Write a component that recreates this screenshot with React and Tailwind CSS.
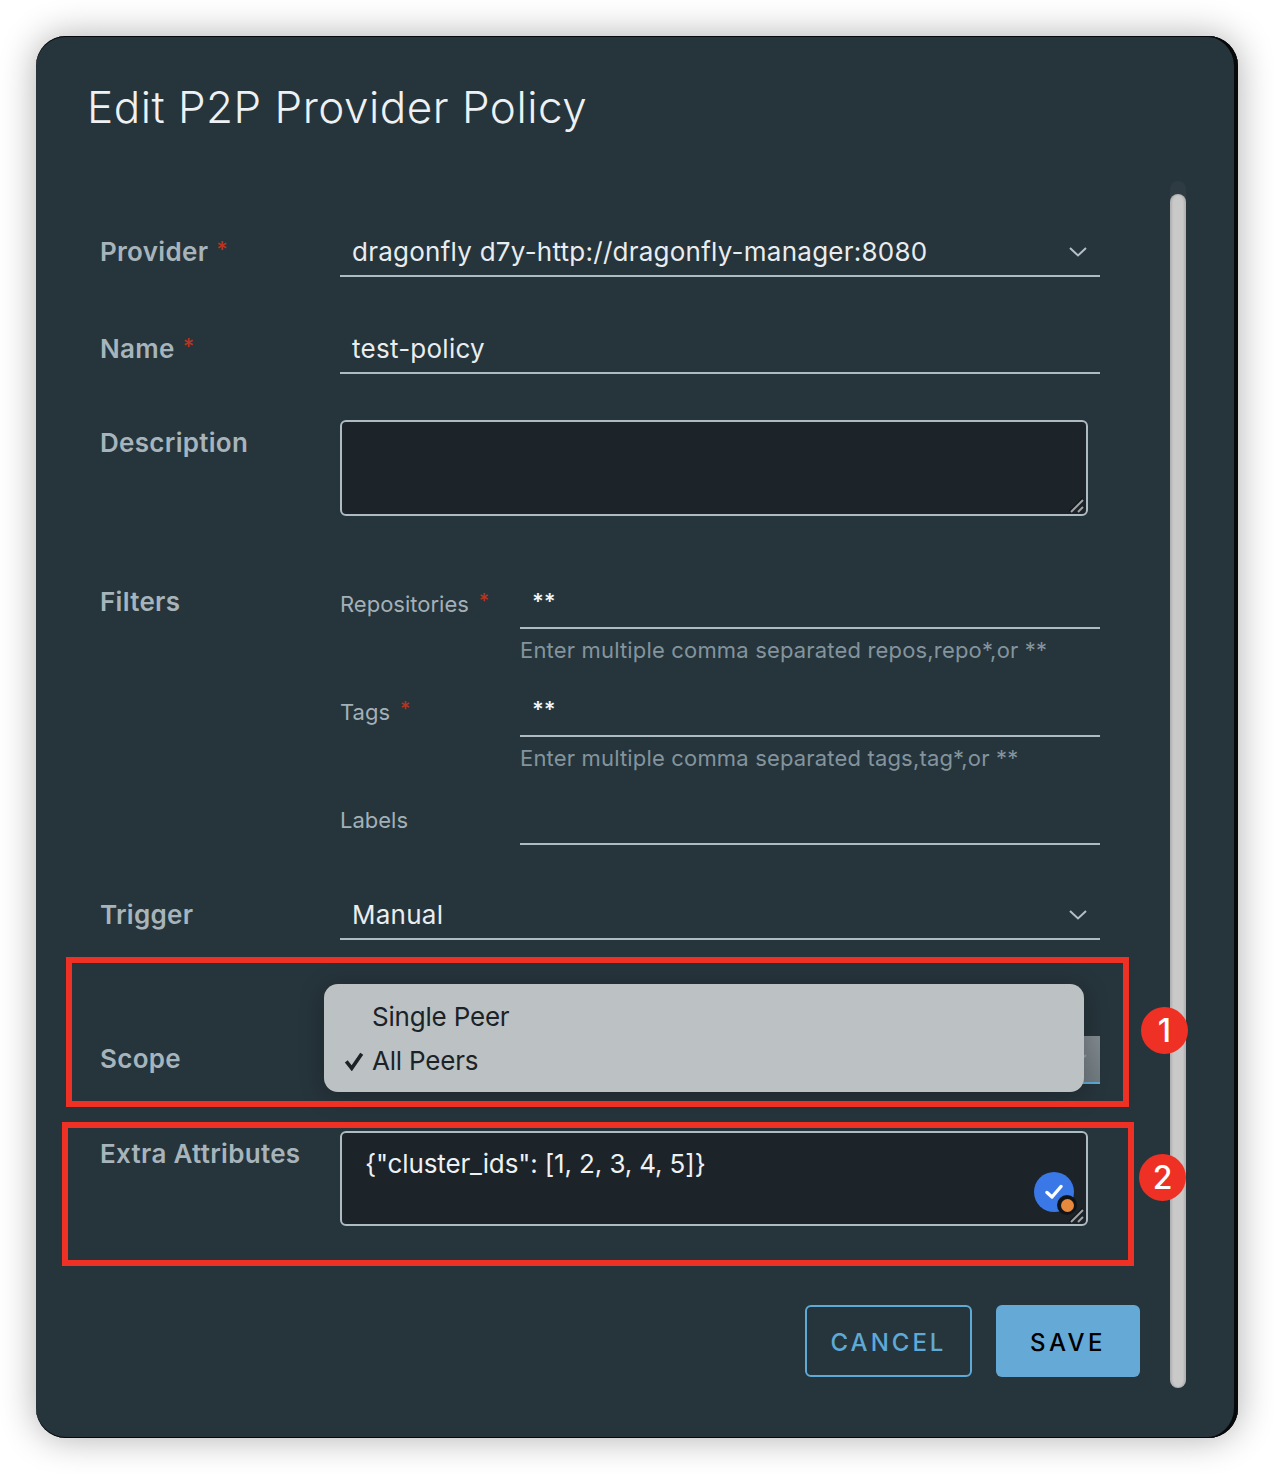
function Chevron({ className, color = '#b4bfc6' }) {
  return (
    <svg className={className} width="20" height="12" viewBox="0 0 20 12" fill="none">
      <path d="M2 2 L10 9.5 L18 2" stroke={color} strokeWidth="2" />
    </svg>
  )
}

function Grip() {
  return (
    <svg className="absolute right-[1px] bottom-[1px]" width="16" height="16" viewBox="0 0 16 16">
      <path d="M1 15 L14 2" stroke="#15191d" strokeWidth="3.5" />
      <path d="M2 15 L14 3" stroke="#a0a4a6" strokeWidth="2" />
      <path d="M9 15 L14 10" stroke="#a0a4a6" strokeWidth="2" />
    </svg>
  )
}

function Label({ children, required }) {
  return (
    <div className="w-[240px] h-[46px] pb-[2px] shrink-0 flex items-center text-[26px] font-semibold text-[#a7b4bc] tracking-[0.3px]">
      <span>{children}</span>
      {required && <span className="ml-[8px] mb-[4px] text-[22px] font-medium text-[#b8341f]">*</span>}
    </div>
  )
}

function Select({ value, chevron = true }) {
  return (
    <div className="w-[760px] h-[48px] border-b-2 border-[#aebbc3] pl-[12px] pr-[12px] pb-[1px] flex items-center justify-between text-[26px] tracking-[0.25px] text-[#e9edef]">
      <span>{value}</span>
      {chevron && <Chevron className="mt-[1px]" />}
    </div>
  )
}

function SubField({ label, required, value, hint }) {
  return (
    <div>
      <div className="flex h-[48px]">
        <div className="w-[180px] shrink-0 flex items-center pb-[2px] text-[22px] text-[#a3b0b8]">
          <span>{label}</span>
          {required && <span className="ml-[10px] mb-[6px] text-[20px] font-medium text-[#b8341f]">*</span>}
        </div>
        <div className="w-[580px] border-b-2 border-[#aebbc3] pl-[12px] pb-[6px] flex items-center text-[22px] font-semibold text-[#f2f4f5]">
          {value}
        </div>
      </div>
      {hint && <div className="ml-[180px] mt-[10px] h-[24px] leading-[22px] text-[22px] tracking-[0.17px] text-[#83949e]">{hint}</div>}
    </div>
  )
}

export default function App() {
  return (
    <div className="w-[1274px] h-[1474px] bg-white pl-[36px] pt-[36px] font-['Inter',sans-serif]">
      <div className="relative w-[1202px] h-[1402px] rounded-[30px] bg-[#26343b] pt-[44px] shadow-[inset_-4px_0_0_#07090a,inset_0_1px_0_#07090a,inset_0_-1px_0_#07090a,0_0_36px_rgba(0,0,0,0.32)]">
        <h1 className="ml-[51px] h-[54px] leading-[54px] text-[44px] font-light text-[#eef1f3] tracking-[0.5px]">
          Edit P2P Provider Policy
        </h1>

        <div className="ml-[64px] w-[1040px] mt-[95px]">
          <div className="flex">
            <Label required>Provider</Label>
            <Select value="dragonfly d7y-http://dragonfly-manager:8080" />
          </div>

          <div className="flex mt-[49px]">
            <Label required>Name</Label>
            <Select value="test-policy" chevron={false} />
          </div>

          <div className="flex mt-[46px]">
            <Label>Description</Label>
            <div className="relative w-[748px] h-[96px] rounded-[6px] border-2 border-[#aebbc3] bg-[#1c2329]">
              <Grip />
            </div>
          </div>

          <div className="flex mt-[63px]">
            <Label>Filters</Label>
            <div className="pt-[2px]">
              <SubField label="Repositories" required value="**" hint="Enter multiple comma separated repos,repo*,or **" />
              <div className="mt-[26px]">
                <SubField label="Tags" required value="**" hint="Enter multiple comma separated tags,tag*,or **" />
              </div>
              <div className="mt-[26px]">
                <SubField label="Labels" />
              </div>
            </div>
          </div>

          <div className="flex mt-[47px]">
            <Label>Trigger</Label>
            <Select value="Manual" />
          </div>

          <div className="flex mt-[96px]">
            <Label>Scope</Label>
            <div className="w-[760px] h-[48px] bg-[linear-gradient(180deg,#81898e,#6f7a80)] border-b-2 border-[#5fa8d3] pr-[12px] flex items-center justify-end">
              <Chevron color="#9aa3a8" />
            </div>
          </div>

          <div className="flex mt-[47px]">
            <Label>Extra Attributes</Label>
            <div className="relative w-[748px] h-[95px] rounded-[6px] border-2 border-[#aebbc3] bg-[#1c2329] pl-[23px] pt-[14px] text-[26px] leading-[34px] tracking-[-0.13px] text-[#eef1f3]">
              {'{"cluster_ids": [1, 2, 3, 4, 5]}'}
              <div className="absolute left-[692px] top-[39px] w-[40px] h-[40px] rounded-full bg-[#3b78e7] flex items-center justify-center">
                <svg width="18" height="16" viewBox="0 0 18 16" fill="none">
                  <path d="M2 8.5 L7 13 L16 2.5" stroke="#ffffff" strokeWidth="3.4" strokeLinecap="round" strokeLinejoin="round" />
                </svg>
              </div>
              <div className="absolute left-[715px] top-[62px] w-[20px] h-[20px] rounded-full bg-[#111417] flex items-center justify-center">
                <div className="w-[13px] h-[13px] rounded-full bg-[#e5893f]" />
              </div>
              <Grip />
            </div>
          </div>

          <div className="flex justify-end gap-[24px] mt-[79px]">
            <button className="w-[167px] h-[72px] pt-[4px] rounded-[6px] border-2 border-[#5fa9d6] text-[24px] font-medium tracking-[3px] text-[#5fa9d6]">
              CANCEL
            </button>
            <button className="w-[144px] h-[72px] pt-[4px] rounded-[6px] bg-[#65aad6] text-[24px] font-medium tracking-[3.4px] text-black">
              SAVE
            </button>
          </div>
        </div>

        {/* scrollbar */}
        <div className="absolute left-[1134px] top-[145px] w-[16px] h-[1207px] rounded-full bg-[#2e3b43] pt-[13px]">
          <div className="h-full rounded-full bg-[#c9c9c9] shadow-[inset_2px_0_2px_rgba(0,0,0,0.12),inset_-2px_0_2px_rgba(0,0,0,0.12)]" />
        </div>

        {/* open dropdown of the scope select */}
        <div className="absolute left-[288px] top-[948px] w-[760px] h-[108px] pt-[10px] rounded-[14px] bg-[#bcc2c4] shadow-[0_4px_24px_rgba(0,0,0,0.25)] text-[26px] tracking-[-0.2px] text-[#1c2327]">
          <div className="h-[44px] pl-[48px] flex items-center">Single Peer</div>
          <div className="h-[44px] pl-[48px] flex items-center relative">
            <svg className="absolute left-[20px] top-[13px]" width="20" height="20" viewBox="0 0 22 22" fill="none">
              <path d="M2.5 11.5 L8.5 19 L19.5 3" stroke="currentColor" strokeWidth="4" />
            </svg>
            All Peers
          </div>
        </div>

        {/* annotations */}
        <div className="absolute left-[30px] top-[921px] w-[1063px] h-[150px] border-[6px] border-[#ee3124]" />
        <div className="absolute left-[26px] top-[1086px] w-[1072px] h-[144px] border-[6px] border-[#ee3124]" />
        <div className="absolute left-[1105px] top-[971px] w-[47px] h-[47px] rounded-full bg-[#ee3124] flex items-center justify-center text-[32px] font-medium text-white">1</div>
        <div className="absolute left-[1103px] top-[1118px] w-[47px] h-[47px] rounded-full bg-[#ee3124] flex items-center justify-center text-[32px] font-medium text-white">2</div>
      </div>
    </div>
  )
}
